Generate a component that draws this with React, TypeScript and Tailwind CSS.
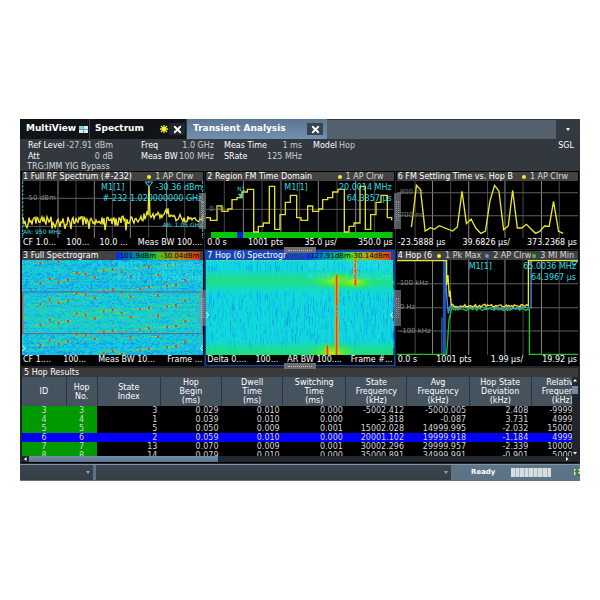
import React from 'react';
import { X } from 'lucide-react';

const random = (seed: number) => {
  let s = seed;
  return () => {
    s = (s * 16807) % 2147483647;
    return s / 2147483647;
  };
};

type Point = [number, number];
const toPoints = (pts: Point[]) => pts.map((p) => p.join(',')).join(' ');

// ---- traces -------------------------------------------------------------

const buildSpectrum = () => {
  const rnd = random(77);
  const pts: Point[] = [];
  for (let x = 0; x <= 544; x += 3) {
    let base = 119;
    if (x > 250) base = 119 - (x - 250) * 0.03;
    base -= 22 * Math.exp(-Math.pow((x - 433) / 20, 2));
    base -= 14 * Math.exp(-Math.pow((x - 381) / 24, 2));
    let y = base + (rnd() - 0.5) * 24;
    if (rnd() > 0.84 && x < 350) y += 20;
    if (Math.abs(x - 381) < 3) y = 14;
    pts.push([x, y]);
  }
  return pts;
};

const buildHops = () => {
  const period: Point[] = [
    [0, 110], [13, 118], [33, 75], [48, 91], [66, 84], [78, 56], [93, 50], [108, 33], [124, 25],
    [143, 153], [157, 136], [172, 126], [190, 16], [206, 145], [222, 101], [238, 64], [253, 43],
  ];
  const pts: Point[] = [];
  for (let k = 0; k < 3; k++) {
    period.forEach(([x, y], i) => {
      const end = i + 1 < period.length ? period[i + 1][0] : 272;
      pts.push([x + k * 272, y], [end + k * 272, y]);
    });
  }
  return pts.filter(([x]) => x <= 562);
};

const settling: Point[] = [
  [43, 138], [50, 83], [58, 13], [70, 26], [84, 150], [100, 140], [112, 145], [126, 134], [166, 150],
  [180, 138], [194, 31], [207, 128], [221, 114], [235, 141], [250, 157], [264, 150], [277, 61],
  [291, 13], [304, 30], [318, 146], [332, 135], [345, 28], [359, 141], [372, 141], [386, 130],
  [413, 157], [426, 151], [440, 135], [454, 136], [467, 61], [482, 151], [496, 157],
];

const buildFlat = (seed: number, y: number) => {
  const rnd = random(seed);
  const pts: Point[] = [];
  for (let x = 166; x <= 392; x += 4) pts.push([x, y + (rnd() - 0.5) * 8]);
  return pts;
};

const spectrum = buildSpectrum();
const hops = buildHops();

// ---- spectrogram cells --------------------------------------------------

const buildFullCells = () => {
  const rnd = random(4242);
  const colors = ['#1498ea', '#14aeee', '#18c8e0', '#1fd4bc', '#2fd890', '#1a80d4'];
  const paths = colors.map(() => '');
  for (let y = 0; y < 285; y += 4) {
    const green = rnd() * 0.28 + (y > 95 && y < 222 ? 0.2 : 0);
    for (let x = 0; x < 544; x += 5) {
      const v = rnd() * 0.85 + green;
      const i = v < 0.04 ? 5 : v < 0.3 ? 0 : v < 0.52 ? 1 : v < 0.86 ? 2 : v < 1.05 ? 3 : 4;
      paths[i] += `M${x} ${y}h5v4h-5z`;
    }
  }
  return colors.map((color, i) => ({ color, d: paths[i] }));
};

const buildHopCells = () => {
  const rnd = random(991);
  const colors = ['#1a86ea', '#10a8ee', '#0cc4ec', '#14dcd0'];
  const paths = colors.map(() => '');
  for (let n = 0; n < 2300; n++) {
    const x = Math.floor(rnd() * 188) * 3;
    const y = rnd() * 285;
    const quiet = (y > 28 && y < 88) || y > 245;
    const r = rnd();
    const i = quiet ? 3 : r < 0.1 ? 0 : r < 0.38 ? 1 : r < 0.7 ? 2 : 3;
    const h = Math.round(8 + rnd() * 24);
    paths[i] += `M${x} ${y.toFixed(0)}h3v${h}h-3z`;
  }
  return colors.map((color, i) => ({ color, d: paths[i] }));
};

const buildHits = () => {
  const pattern: Point[] = [
    [67, 109], [95, 95], [122, 105], [150, 98], [176, 138], [203, 142], [230, 152], [257, 131],
    [284, 127], [311, 135], [338, 148], [366, 124], [393, 120], [420, 144], [447, 116], [474, 113],
    [502, 99],
  ];
  const pts: Point[] = [];
  for (let k = -2; k < 5; k++) {
    pattern.forEach(([x, y]) => {
      const py = y + k * 61.5 - 38;
      if (py > 0 && py < 284) pts.push([x - 12, py]);
    });
  }
  return pts;
};

const fullCells = buildFullCells();
const hopCells = buildHopCells();
const hits = buildHits();

// ---- shared pieces ------------------------------------------------------

const Plot = ({ w, h, children }: { w: number; h: number; children: React.ReactNode }) => (
  <svg viewBox={`0 0 ${w} ${h}`} preserveAspectRatio="none" className="absolute inset-0 h-full w-full" aria-hidden="true">
    {children}
  </svg>
);

const Grid = ({ xs, ys, w, h }: { xs: number[]; ys: number[]; w: number; h: number }) => (
  <g strokeWidth="3">
    {xs.map((x, i) => (
      <path key={x} d={`M${x} 0V${h}`} stroke={i % 2 ? '#858585' : '#484848'} />
    ))}
    {ys.map((y) => (
      <path key={y} d={`M0 ${y}H${w}`} stroke="#606060" />
    ))}
  </g>
);

const Dot = ({ className }: { className: string }) => (
  <span className={`mr-1 inline-block h-1 w-1 rounded-full ${className}`} />
);

type PanelProps = {
  title: string;
  legend?: React.ReactNode;
  footer: string[];
  tall?: boolean;
  active?: boolean;
  children: React.ReactNode;
};

const Panel = ({ title, legend, footer, tall, active, children }: PanelProps) => (
  <section className={`relative min-w-0 border ${active ? 'border-[#1746b4] bg-[#1746b4]' : 'border-black bg-black'}`}>
    <header
      className={`flex h-[9px] items-center justify-between whitespace-nowrap pl-px leading-[9px] text-white ${
        active ? 'bg-[#1746b4]' : 'bg-[#424242]'
      }`}
    >
      <h2>{title}</h2>
      {legend}
    </header>
    <div className={`relative overflow-hidden bg-black ${tall ? 'h-[95px]' : 'h-[57px]'}`}>{children}</div>
    <footer className="flex h-[10px] justify-between whitespace-nowrap bg-black px-px leading-[10px] text-white">
      {footer.map((f) => (
        <span key={f}>{f}</span>
      ))}
    </footer>
  </section>
);

const Legend = ({ children }: { children: React.ReactNode }) => (
  <span className="flex items-center pr-[10px] text-[#d8d8d8]">{children}</span>
);

const SideHandle = ({ className }: { className: string }) => (
  <div className={`absolute z-10 flex h-9 w-[7px] items-center justify-center bg-[#8c9197]/60 ${className}`}>
    <div className="h-5 w-[3px] border-x border-dotted border-[#c0c0c0]/60" />
  </div>
);

const RowHandle = ({ className }: { className: string }) => (
  <div className={`absolute left-1/2 z-10 flex h-[6px] w-8 -translate-x-1/2 items-center justify-center bg-[#6b6f74] ${className}`}>
    <div className="w-6 border-t border-dotted border-[#c0c0c0]" />
  </div>
);

const EdgeMarks = () => (
  <g fill="none" stroke="#fff" strokeWidth="3">
    <path d="M1 -8l7 8l-7 8" />
  </g>
);

// ---- header -------------------------------------------------------------

const TabBar = () => (
  <nav className="flex h-5 items-stretch bg-[#343a42] text-[9px] font-bold text-white">
    <div className="flex w-[69px] items-center justify-between bg-[#101317] pl-[6px] pr-px">
      <button type="button">MultiView</button>
      <svg viewBox="0 0 9 7" className="h-[7px] w-[9px]" aria-hidden="true">
        <path d="M0 0h4v3H0z" fill="#6fdcf0" />
        <path d="M5 0h4v3H5zM0 4h4v3H0zM5 4h4v3H5z" fill="#dce8f4" />
        <path d="M4 0h1v7H4zM0 3h9v1H0z" fill="#7d93a8" />
      </svg>
    </div>
    <div className="ml-px flex w-[96px] items-center bg-[#101317] pl-[5px]">
      <button type="button">Spectrum</button>
      <svg viewBox="0 0 8 8" className="ml-auto h-2 w-2" aria-hidden="true">
        <path d="M4 0v8M0 4h8M1 1l6 6M7 1L1 7" stroke="#f6f233" strokeWidth="1.300" />
      </svg>
      <button type="button" aria-label="Close Spectrum" className="mx-px flex h-3 w-4 items-center justify-center bg-[#22272d]">
        <X className="h-[11px] w-[11px]" strokeWidth={4} />
      </button>
    </div>
    <div className="ml-px flex w-[140px] items-center bg-gradient-to-b from-[#5b7592] to-[#7290ae] pl-[6px]">
      <button type="button">Transient Analysis</button>
      <button type="button" aria-label="Close Transient Analysis" className="ml-auto mr-1 flex h-3 w-4 items-center justify-center bg-[#39434f]">
        <X className="h-[11px] w-[11px]" strokeWidth={4} />
      </button>
    </div>
    <div className="mt-px flex-1 bg-[#54606c]" />
    <button type="button" aria-label="More tabs" className="flex w-6 items-center justify-center">
      <svg viewBox="0 0 4 3" className="h-[3px] w-1" aria-hidden="true">
        <path d="M0 0h4L2 3z" fill="#fff" />
      </svg>
    </button>
  </nav>
);

const Setting = ({ label, value }: { label: string; value: string }) => (
  <div className="flex justify-between">
    <dt className="text-white">{label}</dt>
    <dd className="text-[#c9ced4]">{value}</dd>
  </div>
);

const Settings = () => (
  <div className="flex justify-between whitespace-nowrap bg-[#33383f] pl-2 pr-[6px] pt-px leading-[11px]">
    <dl className="flex">
      <div className="w-[85px]">
        <Setting label="Ref Level" value="-27.91 dBm" />
        <Setting label="Att" value="0 dB" />
        <div className="-ml-px leading-[9px] text-[#d6dade]">TRG:IMM YIG Bypass</div>
      </div>
      <div className="ml-7 w-[73px]">
        <Setting label="Freq" value="1.0 GHz" />
        <Setting label="Meas BW" value="100 MHz" />
      </div>
      <div className="ml-[10px] w-[78px]">
        <Setting label="Meas Time" value="1 ms" />
        <Setting label="SRate" value="125 MHz" />
      </div>
      <div className="ml-[11px] w-[42px]">
        <Setting label="Model" value="Hop" />
      </div>
    </dl>
    <span className="text-white">SGL</span>
  </div>
);

// ---- results ------------------------------------------------------------

const columns = [
  { name: 'ID', width: 'w-[44px]' },
  { name: 'Hop\nNo.', width: 'w-[31px]' },
  { name: 'State\nIndex', width: 'w-[63px]' },
  { name: 'Hop\nBegin\n(ms)', width: 'w-[61px]' },
  { name: 'Dwell\nTime\n(ms)', width: 'w-[61px]' },
  { name: 'Switching\nTime\n(ms)', width: 'w-[63px]' },
  { name: 'State\nFrequency\n(kHz)', width: 'w-[61px]' },
  { name: 'Avg\nFrequency\n(kHz)', width: 'w-[62px]' },
  { name: 'Hop State\nDeviation\n(kHz)', width: 'w-[62px]' },
  { name: 'Relative\nFrequency\n(kHz)', width: 'w-[62px]' },
];

const rows = [
  ['3', '3', '3', '0.029', '0.010', '0.000', '-5002.412', '-5000.005', '2.408', '-9999.992'],
  ['4', '4', '1', '0.039', '0.010', '0.000', '-3.818', '-0.087', '3.731', '4999.918'],
  ['5', '5', '5', '0.050', '0.009', '0.001', '15002.028', '14999.995', '-2.032', '15000.082'],
  ['6', '6', '2', '0.059', '0.010', '0.000', '20001.102', '19999.918', '-1.184', '4999.923'],
  ['7', '7', '13', '0.070', '0.009', '0.001', '30002.296', '29999.957', '-2.339', '10000.039'],
  ['8', '8', '14', '0.079', '0.010', '0.000', '35000.891', '34999.991', '-0.901', '5000.034'],
];

const Results = () => (
  <section className="mx-[2px] mt-[2px] border-b border-black bg-black">
    <h2 className="h-[9px] bg-[#3a3a3a] pl-[2px] leading-[9px] text-white">5 Hop Results</h2>
    <div className="flex">
      <div className="h-[79px] min-w-0 flex-1 overflow-hidden">
        <table className="w-[104%] table-fixed border-collapse">
          <colgroup>
            {columns.map((c) => (
              <col key={c.name} className={c.width} />
            ))}
          </colgroup>
          <thead>
            <tr className="h-[29px] bg-[#45535f] text-white">
              {columns.map((c) => (
                <th key={c.name} className="whitespace-pre border-r border-[#2c353d] p-0 text-center align-middle font-normal leading-[9px]">
                  {c.name}
                </th>
              ))}
            </tr>
          </thead>
          <tbody>
            {rows.map((row) => (
              <tr key={row[0]} className={`h-[9px] leading-[9px] text-[#d4d4d4] ${row[0] === '6' ? 'bg-[#0000fa]' : ''}`}>
                {row.map((cell, i) => (
                  <td
                    key={i}
                    className={`p-0 ${i < 2 ? 'text-center' : 'pr-[3px] text-right'} ${i < 2 && row[0] !== '6' ? 'bg-[#009a00]' : ''}`}
                  >
                    {cell}
                  </td>
                ))}
              </tr>
            ))}
          </tbody>
        </table>
      </div>
      <div className="flex w-[6px] flex-col items-center bg-[#22272d]">
        <svg viewBox="0 0 6 9" className="h-[9px] w-[6px]" aria-hidden="true">
          <path d="M1 4.500L3 2l2 2.500z" fill="#fff" />
        </svg>
        <div className="h-2 w-full bg-[#6f8aa6]" />
        <svg viewBox="0 0 6 6" className="mt-auto h-[6px] w-[6px]" aria-hidden="true">
          <path d="M1 2L3 4.500L5 2z" fill="#fff" />
        </svg>
      </div>
    </div>
    <div className="flex h-[6px] items-center bg-[#22272d]">
      <svg viewBox="0 0 7 6" className="h-[6px] w-[7px]" aria-hidden="true">
        <path d="M4.500 1L2 3l2.500 2z" fill="#fff" />
      </svg>
      <div className="h-full w-[34%] bg-gradient-to-b from-[#7590ac] to-[#5b7691]" />
      <svg viewBox="0 0 6 6" className="ml-auto mr-2 h-[6px] w-[6px]" aria-hidden="true">
        <path d="M2 1l2.500 2L2 5z" fill="#fff" />
      </svg>
    </div>
  </section>
);

const Picker = ({ label, className }: { label: string; className: string }) => (
  <div className={`relative bg-gradient-to-b from-[#3d464f] to-[#343c44] ${className}`}>
    <select aria-label={label} className="h-full w-full appearance-none bg-transparent text-white" />
    <svg viewBox="0 0 4 3" className="pointer-events-none absolute right-[3px] top-[6px] h-[3px] w-1" aria-hidden="true">
      <path d="M0 0h4L2 3z" fill="#98a3ae" />
    </svg>
  </div>
);

const StatusBar = () => (
  <footer className="mt-px flex h-[17px] items-stretch border-t border-[#8096a8] bg-[#5d7386] pb-px">
    <Picker label="Message type" className="w-[73px]" />
    <Picker label="Message" className="ml-[3px] flex-1" />
    <div className="flex w-[129px] items-center pl-5">
      <span className="w-10 text-[7px] font-bold text-white">Ready</span>
      <div className="flex h-[9px] w-10 gap-px bg-[#a8b2ba]">
        {Array.from({ length: 9 }, (_, i) => (
          <span key={i} className="flex-1 bg-[#d8dde0]" />
        ))}
      </div>
      <svg viewBox="0 0 6 9" className="ml-auto h-[9px] w-[6px]" aria-hidden="true">
        <path d="M0 1h6v6H0z" fill="#d7e2d5" />
        <path d="M3 0l3 4H4.500v4h-3V4H0z" fill="#2d8c33" />
        <path d="M4 6h2v2H4z" fill="#c03030" />
      </svg>
    </div>
  </footer>
);

// ---- page ---------------------------------------------------------------

const markerText = 'absolute whitespace-nowrap text-[#2fdfe6]';

const App = () => {
  return (
    <div className="bg-white px-5 py-[119px] font-['DejaVu_Sans','Liberation_Sans',sans-serif] text-[8px]">
      <main className="bg-[#20252b]">
        <TabBar />
        <Settings />

        <div className="relative grid grid-cols-[184fr_190fr_184fr] gap-x-px gap-y-px px-px">
          <Panel
            title="1 Full RF Spectrum (#-232)"
            legend={<Legend><Dot className="bg-[#f3ee32]" />1 AP Clrw</Legend>}
            footer={['CF 1.0...', '100...', '10.0 ...', 'Meas BW 100....']}
          >
            <Plot w={544} h={171}>
              <Grid w={544} h={171} xs={[54, 108, 162, 217, 271, 325, 380, 434, 488]} ys={[52, 136]} />
              <path d="M2 0V171M542 0V171" stroke="#1fd0d6" strokeWidth="3" strokeDasharray="9 3" />
              <polyline points={toPoints(spectrum)} fill="none" stroke="#f0ea2c" strokeWidth="4" />
              <path d="M370 3h22l-11 15z" fill="none" stroke="#2fd5dc" strokeWidth="3" />
            </Plot>
            <span className="absolute left-1 top-[13px] text-[7px] leading-[9px] text-[#8a8a8a]">-50 dBm</span>
            <span className={`${markerText} right-[79px] top-[2px] leading-[9px]`}>M1[1]</span>
            <span className={`${markerText} right-px top-[2px] leading-[9px]`}>-30.36 dBm</span>
            <span className={`${markerText} right-px top-[13px] leading-[9px]`}>#-232 1.020000000 GHz</span>
            <span className={`${markerText} left-px top-[47px] text-[6px] leading-[8px]`}>AR: 950 MHz</span>
            <span className={`${markerText} right-px top-[40px] text-[6px] leading-[8px]`}>AR: 1.05 GHz</span>
          </Panel>

          <Panel
            title="2 Region FM Time Domain"
            legend={<Legend><Dot className="bg-[#f3ee32]" />1 AP Clrw</Legend>}
            footer={['0.0 s', '1001 pts', '35.0 µs/', '350.0 µs']}
          >
            <Plot w={562} h={171}>
              <Grid w={562} h={171} xs={[55, 112, 168, 225, 281, 337, 393, 449, 506]} ys={[85]} />
              <path d="M15 153H560V171H15z" fill="#08c408" />
              <path d="M94 153h17v18H94z" fill="#1010f0" />
              <polyline points={toPoints(hops)} fill="none" stroke="#e6df2a" strokeWidth="4" />
              <path d="M96 38h16l-8 13z" fill="#2fd5dc" />
            </Plot>
            <span className="absolute left-[3px] top-6 text-[7px] leading-[9px] text-[#777]">0 Hz</span>
            <span className={`${markerText} left-[31px] top-[4px] text-[6px] leading-[8px]`}>N1</span>
            <span className={`${markerText} left-[78px] top-[2px] leading-[9px]`}>M1[1]</span>
            <span className={`${markerText} right-[2px] top-[2px] leading-[9px]`}>20.0014 MHz</span>
            <span className={`${markerText} right-[2px] top-[13px] leading-[9px]`}>64.3357 µs</span>
          </Panel>

          <Panel
            title="6 FM Settling Time vs. Hop B"
            legend={<Legend><Dot className="bg-[#f3ee32]" />1 AP Clrw</Legend>}
            footer={['-23.5888 µs', '39.6826 µs/', '373.2368 µs']}
          >
            <Plot w={541} h={171}>
              <Grid w={541} h={171} xs={[54, 106, 160, 214, 270, 322, 376, 431, 484]} ys={[35, 104]} />
              <polyline points={toPoints(settling)} fill="none" stroke="#ece628" strokeWidth="4" />
            </Plot>
            <span className="absolute left-[3px] top-[7px] text-[7px] leading-[9px] text-[#777]">800 ns</span>
            <span className="absolute left-[3px] top-[30px] text-[7px] leading-[9px] text-[#777]">700 ns</span>
          </Panel>

          <Panel
            title="3 Full Spectrogram"
            legend={
              <span className="mr-[3px] flex h-2 w-[84px] items-center justify-between bg-gradient-to-r from-[#1428e0] via-[#40c020] to-[#e02810] px-px leading-[8px] text-black text-[7px]">
                <span>-101.9dBm</span>
                <span>-30.04dBm</span>
              </span>
            }
            footer={['CF 1....', '100...', 'Meas BW 10...', 'Frame ...']}
            tall
          >
            <Plot w={544} h={285}>
              <defs>
                <linearGradient id="streak">
                  <stop offset="0" stopColor="#40dc60" stopOpacity="0" />
                  <stop offset="0.500" stopColor="#80e630" />
                  <stop offset="1" stopColor="#40dc60" stopOpacity="0" />
                </linearGradient>
              </defs>
              <path d="M0 0H544V285H0z" fill="#18c4d8" />
              {fullCells.map((c) => (
                <path key={c.color} d={c.d} fill={c.color} />
              ))}
              {hits.map(([x, y], i) => (
                <g key={i}>
                  <path d={`M${x - 50} ${y + 2}L${x + 40} ${y - 5}v4L${x - 50} ${y + 5}z`} fill="url(#streak)" opacity="0.600" />
                  <rect x={x - 7} y={y - 1} width="14" height="3" fill="#c8d828" opacity="0.600" />
                  <rect x={x - 3} y={y - 3} width="6" height="6" fill="#f42a10" />
                </g>
              ))}
              <path d="M2 96H541V221H2z" fill="none" stroke="#6a5c98" strokeWidth="3" />
              <path d="M2 96V221" stroke="#d04848" strokeWidth="3" />
              <g transform="translate(0 265)"><EdgeMarks /></g>
              <g transform="translate(544 265) scale(-1 1)"><EdgeMarks /></g>
            </Plot>
            <span className={`${markerText} right-[62px] top-[2px] leading-[9px]`}>M1[1]</span>
            <span className={`${markerText} right-[2px] top-[2px] leading-[9px]`}>-30.36 dBm</span>
            <span className={`${markerText} right-[62px] top-[13px] leading-[9px]`}>#-232</span>
            <span className={`${markerText} right-[2px] top-[13px] leading-[9px]`}>1.0200 GHz</span>
          </Panel>

          <Panel
            title="7 Hop (6) Spectrogr"
            legend={
              <span className="mr-[3px] flex h-2 w-[84px] items-center justify-between bg-gradient-to-r from-[#1428f0] via-[#40d820] to-[#e83810] px-px leading-[8px] text-black text-[7px]">
                <span>-127.91dBm</span>
                <span>-30.14dBm</span>
              </span>
            }
            footer={['Delta 0....', '100...', 'AR BW 100....', 'Frame #...']}
            tall
            active
          >
            <Plot w={562} h={285}>
              <defs>
                <linearGradient id="band" x2="0" y2="1">
                  <stop offset="0" stopColor="#20e080" stopOpacity="0" />
                  <stop offset="0.500" stopColor="#22e070" stopOpacity="0.900" />
                  <stop offset="1" stopColor="#20e080" stopOpacity="0" />
                </linearGradient>
                <radialGradient id="glow">
                  <stop offset="0" stopColor="#b8f010" />
                  <stop offset="0.500" stopColor="#50ea30" stopOpacity="0.700" />
                  <stop offset="1" stopColor="#20e080" stopOpacity="0" />
                </radialGradient>
                <linearGradient id="carrier">
                  <stop offset="0" stopColor="#d8e818" stopOpacity="0" />
                  <stop offset="0.200" stopColor="#f0b010" />
                  <stop offset="0.500" stopColor="#f03008" />
                  <stop offset="0.800" stopColor="#f0b010" />
                  <stop offset="1" stopColor="#d8e818" stopOpacity="0" />
                </linearGradient>
              </defs>
              <path d="M0 0H562V285H0z" fill="#10d8dc" />
              {hopCells.map((c) => (
                <path key={c.color} d={c.d} fill={c.color} opacity="0.600" />
              ))}
              <path d="M0 28H562V98H0z" fill="url(#band)" />
              <path d="M0 240H562V320H0z" fill="url(#band)" />
              <ellipse cx="392" cy="62" rx="90" ry="28" fill="url(#glow)" />
              <ellipse cx="446" cy="66" rx="70" ry="26" fill="url(#glow)" />
              <ellipse cx="380" cy="278" rx="84" ry="34" fill="url(#glow)" />
              <rect x="385" y="45" width="14" height="240" fill="url(#carrier)" />
              <rect x="441" y="0" width="14" height="76" fill="url(#carrier)" />
              <rect x="357" y="256" width="14" height="29" fill="url(#carrier)" />
              <path d="M0 2H562" stroke="#b8d858" strokeWidth="2" strokeDasharray="5 5" />
              <path d="M383 155h18l-9 12zM386 133v12l12-12v12" fill="none" stroke="#2fd5dc" strokeWidth="3" />
              <g transform="translate(0 165)"><EdgeMarks /></g>
              <g transform="translate(562 165) scale(-1 1)"><EdgeMarks /></g>
            </Plot>
            <span className={`${markerText} right-[62px] top-[2px] leading-[9px]`}>M1[1]</span>
            <span className={`${markerText} right-[2px] top-[2px] leading-[9px]`}>-30.34 dBm</span>
            <span className={`${markerText} right-[62px] top-[13px] leading-[9px]`}>#-115</span>
            <span className={`${markerText} right-[2px] top-[13px] leading-[9px]`}>1.0200 GHz</span>
          </Panel>

          <Panel
            title="4 Hop (6"
            legend={
              <span className="flex items-center pr-1 text-[#d8d8d8]">
                <Dot className="bg-[#f3ee32]" />1 Pk Max
                <Dot className="ml-1 bg-[#5a96f0]" />2 AP Clrw
                <Dot className="ml-px bg-[#30d030]" />3 MI Min
              </span>
            }
            footer={['0.0 s', '1001 pts', '1.99 µs/', '19.92 µs']}
            tall
          >
            <Plot w={541} h={285}>
              <Grid w={541} h={285} xs={[54, 106, 160, 214, 270, 322, 376, 431, 484]} ys={[71, 143, 213]} />
              <path d="M134 285V172" stroke="#3b7fe6" strokeWidth="3" />
              <path d="M137 0h9v285h-9z" fill="#1c57b0" />
              <g fill="none" strokeWidth="4">
                <polyline points={`0,283 148,283 152,230 155,180 162,150 ${toPoints(buildFlat(5, 148))} 395,148 395,283 541,283`} stroke="#22c428" />
                <polyline points={`147,0 147,92 153,160 158,140 163,142 ${toPoints(buildFlat(9, 143))} 400,143 400,0`} stroke="#4a8cf0" />
                <polyline points={`0,2 148,2 148,75 152,45 156,110 158,92 162,136 ${toPoints(buildFlat(13, 137))} 392,137 392,2 541,2`} stroke="#ece628" />
                <path d="M520 4h18l-9 12z" stroke="#2fd5dc" strokeWidth="3" />
              </g>
            </Plot>
            <span className="absolute left-[3px] top-[19px] text-[7px] leading-[9px] text-[#8a8a8a]">100 kHz</span>
            <span className="absolute left-[3px] top-[43px] text-[7px] leading-[9px] text-[#8a8a8a]">0 Hz</span>
            <span className="absolute left-[3px] top-[67px] text-[7px] leading-[9px] text-[#8a8a8a]">-100 kHz</span>
            <span className={`${markerText} left-[72px] top-[2px] leading-[9px]`}>M1[1]</span>
            <span className={`${markerText} right-[2px] top-[2px] leading-[9px]`}>65.0036 MHz</span>
            <span className={`${markerText} right-[2px] top-[13px] leading-[9px]`}>64.3967 µs</span>
          </Panel>

          {/* splitter grips */}
          <SideHandle className="left-[32%] top-[22px]" />
          <SideHandle className="right-[32%] top-[22px]" />
          <SideHandle className="left-[32%] bottom-10" />
          <SideHandle className="right-[32%] bottom-10" />
          <RowHandle className="top-[76px]" />
          <RowHandle className="-bottom-[3px]" />
        </div>

        <Results />
        <StatusBar />
      </main>
    </div>
  );
};

export default App;
